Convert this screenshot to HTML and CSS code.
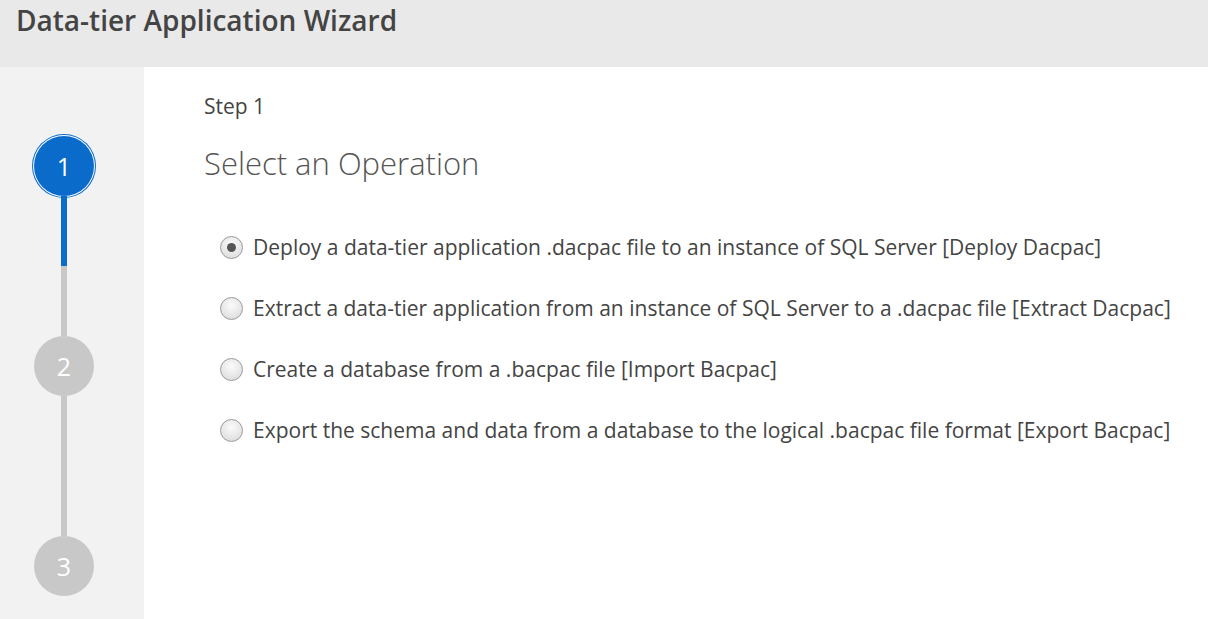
FILE: index.html
```html
<!DOCTYPE html>
<html>
<head>
<meta charset="utf-8">
<title>Data-tier Application Wizard</title>
<link rel="stylesheet" href="styles.css">
</head>
<body>
<div class="app">
  <header class="header">
    <h1 class="title">Data-tier Application Wizard</h1>
  </header>
  <div class="main">
    <aside class="sidebar">
      <div class="stepper">
        <div class="step step-active">1</div>
        <div class="line line-half"></div>
        <div class="step">2</div>
        <div class="line"></div>
        <div class="step">3</div>
      </div>
    </aside>
    <section class="content">
      <div class="step-label">Step 1</div>
      <h2 class="page-title">Select an Operation</h2>
      <div class="options">
        <label class="option"><span class="radio radio-checked"></span><span class="option-text">Deploy a data-tier application .dacpac file to an instance of SQL Server [Deploy Dacpac]</span></label>
        <label class="option"><span class="radio"></span><span class="option-text">Extract a data-tier application from an instance of SQL Server to a .dacpac file [Extract Dacpac]</span></label>
        <label class="option"><span class="radio"></span><span class="option-text">Create a database from a .bacpac file [Import Bacpac]</span></label>
        <label class="option"><span class="radio"></span><span class="option-text">Export the schema and data from a database to the logical .bacpac file format [Export Bacpac]</span></label>
      </div>
    </section>
  </div>
</div>
</body>
</html>
```
FILE: styles.css
```css
* { box-sizing: border-box; }
html, body { margin: 0; padding: 0; height: 100%; }
body {
  font-family: "Open Sans", "Noto Sans", sans-serif;
  color: #444;
  background: #fff;
  overflow: hidden;
}
.app { display: flex; flex-direction: column; height: 619px; }
.header {
  height: 67px;
  flex: none;
  background: #e9e9e9;
  padding: 1px 16px 0;
}
.title {
  margin: 0;
  font-size: 28px;
  font-weight: 600;
  line-height: 38px;
  color: #444;
}
.main { flex: 1; display: flex; min-height: 0; }
.sidebar {
  width: 144px;
  flex: none;
  background: #f2f2f2;
  padding-top: 69px;
}
.stepper {
  display: flex;
  flex-direction: column;
  align-items: center;
  width: 128px;
}
.step {
  width: 60px;
  height: 60px;
  border-radius: 50%;
  background: #c8c8c8;
  color: #fff;
  font-size: 25px;
  display: flex;
  align-items: center;
  justify-content: center;
  flex: none;
}
.step-active {
  background: #0b6bcb;
  box-shadow: 0 0 0 1px #fff, 0 0 0 2px #0b6bcb;
}
.line {
  width: 6px;
  height: 140px;
  background: #c8c8c8;
  flex: none;
}
.line-half {
  background: linear-gradient(#0b6bcb 50%, #c8c8c8 50%);
}
.content {
  flex: 1;
  padding: 26px 0 0 60px;
}
.step-label {
  font-size: 21px;
  line-height: 26px;
  color: #444;
}
.page-title {
  margin: 24px 0 0;
  font-size: 31px;
  font-weight: 300;
  line-height: 40px;
  color: #555;
}
.options {
  margin-top: 50px;
  padding-left: 16px;
  display: flex;
  flex-direction: column;
  gap: 33px;
}
.option {
  display: flex;
  align-items: center;
  gap: 10px;
  height: 28px;
}
.radio {
  width: 23px;
  height: 23px;
  border-radius: 50%;
  border: 1px solid #9a9a9a;
  background: radial-gradient(circle at 50% 35%, #fbfbfb 0%, #e6e6e6 60%, #d6d6d6 100%);
  display: flex;
  align-items: center;
  justify-content: center;
  flex: none;
}
.radio-checked::after {
  content: "";
  width: 9px;
  height: 9px;
  border-radius: 50%;
  background: #555;
}
.option-text {
  font-size: 21px;
  color: #444;
  white-space: nowrap;
}
```
